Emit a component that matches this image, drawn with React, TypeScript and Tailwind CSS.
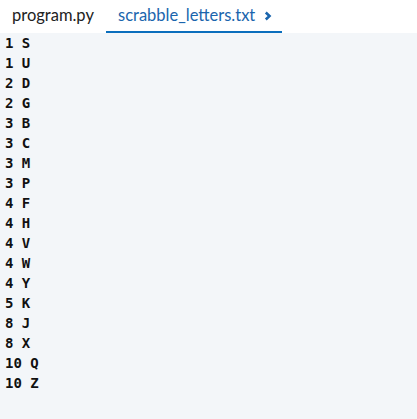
import React from "react";

const rows: [string, string][] = [
  ["1", "S"], ["1", "U"], ["2", "D"], ["2", "G"], ["3", "B"], ["3", "C"],
  ["3", "M"], ["3", "P"], ["4", "F"], ["4", "H"], ["4", "V"], ["4", "W"],
  ["4", "Y"], ["5", "K"], ["8", "J"], ["8", "X"], ["10", "Q"], ["10", "Z"],
];

export default function App() {
  return (
    <div className="w-[417px] h-[419px] flex flex-col bg-white overflow-hidden">
      <div className="h-[33px] flex items-stretch bg-white shrink-0 font-['Lato',sans-serif] text-[16.5px]">
        <div className="flex items-center px-[12px] w-[106px] text-[#222] pb-[2px]">program.py</div>
        <div className="flex items-center pl-[12px] w-[176px] text-[#1a65ad] border-b-[2px] border-[#0a6ebd] gap-[9px]">
          <span>scrabble_letters.txt</span>
          <svg width="8" height="10" viewBox="0 0 8 10" className="mt-[1px]">
            <path d="M1.8 1.5 L5.5 5 L1.8 8.5" stroke="#1a65ad" strokeWidth="2.6" fill="none" />
          </svg>
        </div>
      </div>
      <div className="flex-1 bg-[#f3f6f9] pt-0 pl-[5px] font-['DejaVu_Sans_Mono',monospace] font-bold text-[14px] leading-[20px] text-[#111] whitespace-pre">
        {rows.map(([n, l], i) => (
          <div key={i}>{`${n} ${l}`}</div>
        ))}
      </div>
    </div>
  );
}
